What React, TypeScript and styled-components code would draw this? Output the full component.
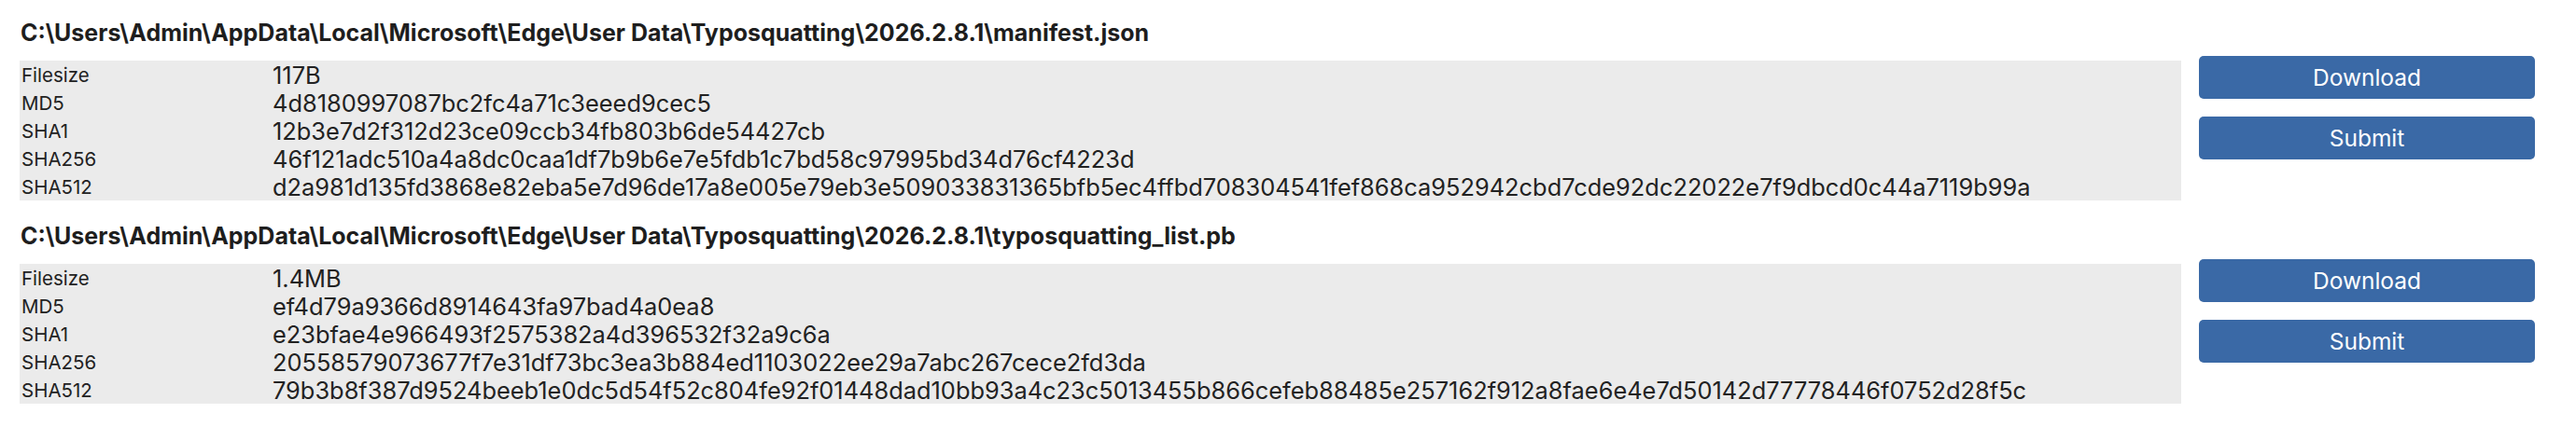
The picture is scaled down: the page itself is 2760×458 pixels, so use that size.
import React from "react";
import styled, { createGlobalStyle } from "styled-components";

const GlobalStyle = createGlobalStyle`
  html, body { margin: 0; padding: 0; background: #ffffff; }
  body { font-family: Inter, "Noto Sans", "Liberation Sans", sans-serif; color: #222222; }
`;

const Page = styled.div`
  display: flex;
  flex-direction: column;
  gap: 23px;
  padding: 20px 44px 0 21px;
`;

const Section = styled.section`
  display: flex;
  flex-direction: column;
`;

const Title = styled.h3`
  margin: 0 0 10px;
  padding-left: 1px;
  font-size: 25px;
  line-height: 30px;
  font-weight: 700;
  color: #1e1e1e;
  white-space: nowrap;
`;

const Row = styled.div`
  display: flex;
  align-items: flex-start;
  gap: 19px;
`;

const Table = styled.div`
  flex: 1;
  margin-top: 5px;
  background: #ebebeb;
  display: grid;
  grid-template-columns: 271px 1fr;
  grid-auto-rows: 30px;
  align-items: center;
`;

const Label = styled.div`
  font-size: 20.5px;
  color: #222222;
  padding-left: 2px;
`;

const Value = styled.div`
  font-size: 25.4px;
  color: #222222;
  white-space: nowrap;
`;

const Actions = styled.div`
  width: 360px;
  display: flex;
  flex-direction: column;
  gap: 19px;
`;

const Button = styled.button`
  height: 46px;
  border: none;
  border-radius: 5px;
  background: #3a69a6;
  color: #ffffff;
  font-family: Inter, "Noto Sans", sans-serif;
  font-size: 24.5px;
  cursor: pointer;
`;

type FileInfo = {
  path: string;
  size: string;
  md5: string;
  sha1: string;
  sha256: string;
  sha512: string;
};

const files: FileInfo[] = [
  {
    path: "C:\\Users\\Admin\\AppData\\Local\\Microsoft\\Edge\\User Data\\Typosquatting\\2026.2.8.1\\manifest.json",
    size: "117B",
    md5: "4d8180997087bc2fc4a71c3eeed9cec5",
    sha1: "12b3e7d2f312d23ce09ccb34fb803b6de54427cb",
    sha256: "46f121adc510a4a8dc0caa1df7b9b6e7e5fdb1c7bd58c97995bd34d76cf4223d",
    sha512:
      "d2a981d135fd3868e82eba5e7d96de17a8e005e79eb3e509033831365bfb5ec4ffbd708304541fef868ca952942cbd7cde92dc22022e7f9dbcd0c44a7119b99a",
  },
  {
    path: "C:\\Users\\Admin\\AppData\\Local\\Microsoft\\Edge\\User Data\\Typosquatting\\2026.2.8.1\\typosquatting_list.pb",
    size: "1.4MB",
    md5: "ef4d79a9366d8914643fa97bad4a0ea8",
    sha1: "e23bfae4e966493f2575382a4d396532f32a9c6a",
    sha256: "20558579073677f7e31df73bc3ea3b884ed1103022ee29a7abc267cece2fd3da",
    sha512:
      "79b3b8f387d9524beeb1e0dc5d54f52c804fe92f01448dad10bb93a4c23c5013455b866cefeb88485e257162f912a8fae6e4e7d50142d77778446f0752d28f5c",
  },
];

export default function App() {
  return (
    <>
      <GlobalStyle />
      <Page>
        {files.map((f) => (
          <Section key={f.path}>
            <Title>{f.path}</Title>
            <Row>
              <Table>
                <Label>Filesize</Label>
                <Value>{f.size}</Value>
                <Label>MD5</Label>
                <Value>{f.md5}</Value>
                <Label>SHA1</Label>
                <Value>{f.sha1}</Value>
                <Label>SHA256</Label>
                <Value>{f.sha256}</Value>
                <Label>SHA512</Label>
                <Value>{f.sha512}</Value>
              </Table>
              <Actions>
                <Button>Download</Button>
                <Button>Submit</Button>
              </Actions>
            </Row>
          </Section>
        ))}
      </Page>
    </>
  );
}
